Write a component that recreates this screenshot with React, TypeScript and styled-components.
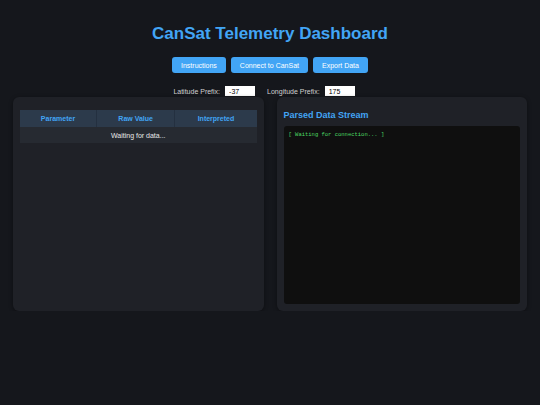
import React from "react";
import styled, { createGlobalStyle } from "styled-components";

const GlobalStyle = createGlobalStyle`
  html, body {
    margin: 0;
    padding: 0;
    background: #15171c;
    font-family: "Liberation Sans", Arial, sans-serif;
    color: #e0e0e0;
  }
`;

const App = () => {
  return (
    <>
      <GlobalStyle />
      <Page>
        <Title>CanSat Telemetry Dashboard</Title>
        <ButtonRow>
          <Button>Instructions</Button>
          <Button>Connect to CanSat</Button>
          <Button>Export Data</Button>
        </ButtonRow>
        <PrefixRow>
          <PrefixField>
            Latitude Prefix:
            <PrefixInput defaultValue="-37" />
          </PrefixField>
          <PrefixField>
            Longitude Prefix:
            <PrefixInput defaultValue="175" />
          </PrefixField>
        </PrefixRow>
        <Panels>
          <Panel>
            <Table>
              <thead>
                <tr>
                  <Th>Parameter</Th>
                  <Th>Raw Value</Th>
                  <Th>Interpreted</Th>
                </tr>
              </thead>
              <tbody>
                <tr>
                  <Td colSpan={3}>Waiting for data...</Td>
                </tr>
              </tbody>
            </Table>
          </Panel>
          <Panel>
            <PanelTitle>Parsed Data Stream</PanelTitle>
            <Stream>[ Waiting for connection... ]</Stream>
          </Panel>
        </Panels>
      </Page>
    </>
  );
};

export default App;

const Page = styled.div`
  padding: 24px 13px 0;
`;

const Title = styled.h1`
  margin: 0;
  text-align: center;
  font-size: 17px;
  line-height: 20px;
  font-weight: bold;
  color: #42a5f5;
`;

const ButtonRow = styled.div`
  display: flex;
  justify-content: center;
  gap: 5px;
  margin-top: 13px;
`;

const Button = styled.button`
  height: 16px;
  padding: 0 9px;
  border: none;
  border-radius: 3px;
  background: #42a5f5;
  color: #fff;
  font-family: "Liberation Sans", Arial, sans-serif;
  font-size: 7px;
  cursor: pointer;
`;

const PrefixRow = styled.div`
  display: flex;
  justify-content: center;
  gap: 12px;
  padding-right: 12px;
  margin-top: 13px;
  margin-bottom: 1px;
`;

const PrefixField = styled.label`
  display: flex;
  align-items: center;
  gap: 5px;
  font-size: 7px;
  color: #d0d0d0;
`;

const PrefixInput = styled.input`
  width: 30px;
  height: 10px;
  box-sizing: border-box;
  border: none;
  padding: 0 4px;
  font-family: "Liberation Sans", Arial, sans-serif;
  font-size: 7px;
  background: #fff;
  color: #000;
`;

const Panels = styled.div`
  display: grid;
  grid-template-columns: 1fr 1fr;
  gap: 13px;
`;

const Panel = styled.div`
  height: 214px;
  box-sizing: border-box;
  padding: 13px 7px 7px;
  background: #1f2127;
  border-radius: 6px;
  box-shadow: 0 1px 4px rgba(0, 0, 0, 0.4);
  display: flex;
  flex-direction: column;
`;

const Table = styled.table`
  width: 100%;
  border-collapse: collapse;
  font-size: 7px;
`;

const Th = styled.th`
  height: 17px;
  padding: 0;
  background: #2c3a4b;
  color: #42a5f5;
  font-weight: bold;
  border-left: 1px solid #243040;
  &:first-child {
    border-left: none;
  }
`;

const Td = styled.td`
  height: 16px;
  padding: 0;
  text-align: center;
  background: #262a31;
  color: #e8e8e8;
`;

const PanelTitle = styled.h2`
  margin: -1px 0 5px;
  font-size: 9px;
  line-height: 12px;
  font-weight: bold;
  color: #42a5f5;
`;

const Stream = styled.div`
  flex: 1;
  background: #0f0f0f;
  border-radius: 3px;
  padding: 5px 5px;
  font-family: "Liberation Mono", "Courier New", monospace;
  font-size: 5.5px;
  color: #4cd964;
`;
